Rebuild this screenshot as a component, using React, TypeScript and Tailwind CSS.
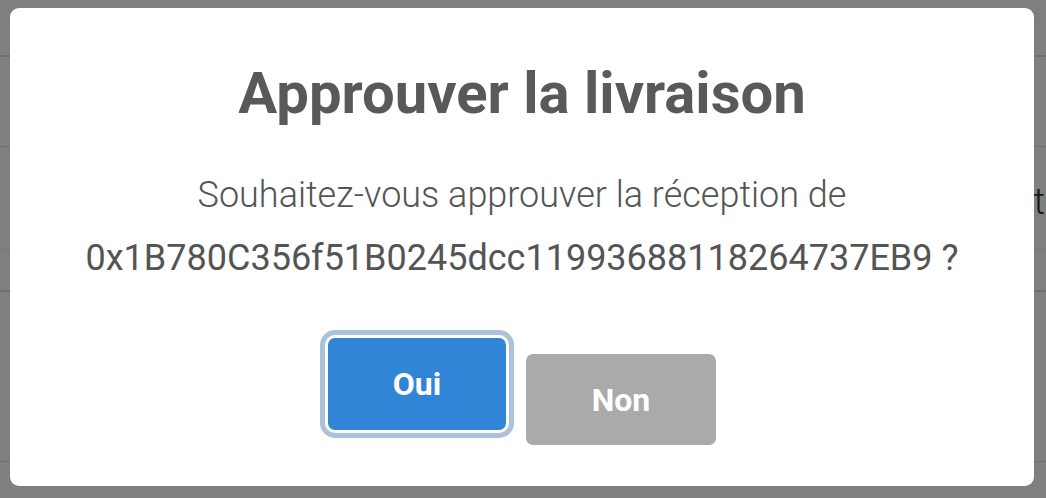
export default function App() {
  return (
    <div className="relative h-[498px] w-[1046px] overflow-hidden bg-white font-['Roboto',sans-serif]">
      {/* page behind the dialog, only its right edge shows */}
      <div className="flex flex-col">
        <div className="h-[57px] border-b-2 border-[#dcdcdc]" />
        <div className="h-[90px] border-b border-[#dcdcdc]" />
        <div className="flex h-[103px] items-center justify-end border-b border-[#f0f0f0] pt-[8px] pr-[1px] text-[36px] font-light text-[#333]">
          rt
        </div>
        <div className="h-[42px] border-b-2 border-[#dcdcdc]" />
        <div className="h-[170px] border-b border-[#dcdcdc]" />
      </div>

      <div className="absolute inset-0 bg-black/50 pl-[10px] pt-[8px]">
        <div className="flex h-[478px] w-[1024px] flex-col items-center rounded-[9px] bg-white">
          <h2 className="mt-[51px] text-[58px] font-bold leading-[68px] text-[#595959]">
            Approuver la livraison
          </h2>
          <p className="mt-[37px] text-center text-[36px] leading-[63px] text-[#545454]">
            <span className="font-light">Souhaitez-vous approuver la réception de</span>
            <br />
            0x1B780C356f51B0245dcc11993688118264737EB9 ?
          </p>
          <div className="mt-[48px] flex items-start gap-[20px]">
            <button className="h-[92px] w-[178px] rounded-[7px] bg-[#3085d6] text-[32px] font-bold text-white ring-[5px] ring-[#aac2da] ring-offset-[3px]">
              Oui
            </button>
            <button className="mt-[16px] h-[91px] w-[190px] rounded-[7px] bg-[#aaaaaa] text-[32px] font-bold text-white">
              Non
            </button>
          </div>
        </div>
      </div>
    </div>
  );
}
